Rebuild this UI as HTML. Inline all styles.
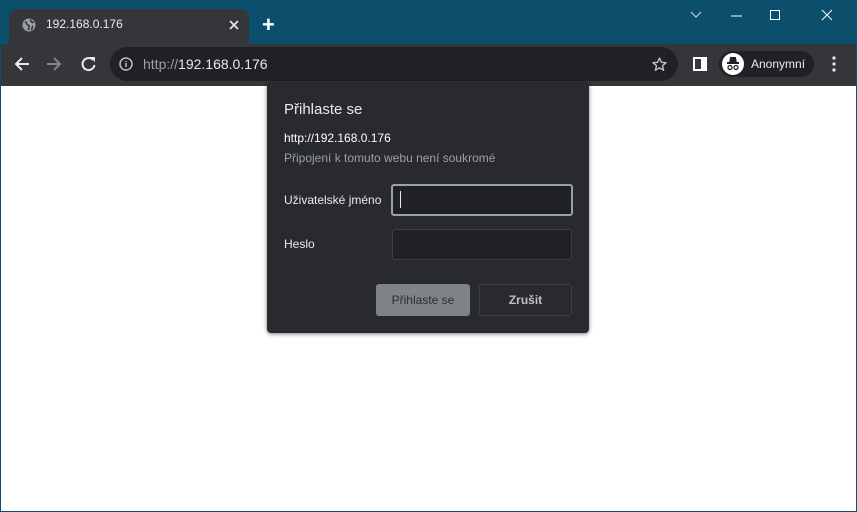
<!DOCTYPE html><html><head><style>
*{margin:0;padding:0;box-sizing:border-box}
body{width:857px;height:512px;overflow:hidden;background:#0b4f6c;font-family:"Liberation Sans",sans-serif;position:relative}
.abs{position:absolute}
</style></head><body>
<div class="abs" style="left:1px;top:86px;width:855px;height:425px;background:#fff"></div>
<div class="abs" style="left:1px;top:44px;width:855px;height:42px;background:#35363a"></div>
<div class="abs" style="left:9px;top:9px;width:240px;height:36px;background:#35363a;border-radius:8px 8px 0 0"></div>
<svg class="abs" style="left:22px;top:18px" width="14" height="14" viewBox="0 0 14 14"><circle cx="7" cy="7" r="6.5" fill="#9aa0a6"/><path d="M3 3.5c2 1 1 3 3 3.5s1 3 0 5M9 1.5c-1 2 1 3 3 3M10 8c1 1 0 3-1 4" stroke="#35363a" stroke-width="1.6" fill="none"/></svg>
<div class="abs" style="left:46px;top:17px;color:#e8eaed;font-size:12px">192.168.0.176</div>
<svg class="abs" style="left:229px;top:20px" width="10" height="10"><path d="M1 1l8 8M9 1l-8 8" stroke="#e8eaed" stroke-width="1.6"/></svg>
<div class="abs" style="left:262px;top:12px;color:#fff;font-size:22px;font-weight:bold">+</div>
<svg class="abs" style="left:688px;top:8px" width="160" height="16"><path d="M3 4l5 5 5-5" stroke="#cfd8dc" fill="none"/><path d="M43 8h11" stroke="#fff"/><rect x="82.5" y="2.5" width="9" height="9" stroke="#fff" fill="none"/><path d="M134 2l10 10M144 2l-10 10" stroke="#fff"/></svg>
<svg class="abs" style="left:12px;top:54px" width="90" height="20"><path d="M4 10h13M10 4l-6 6 6 6" stroke="#e8eaed" stroke-width="2" fill="none"/><path d="M35 10h13M42 4l6 6-6 6" stroke="#80868b" stroke-width="2" fill="none"/><path d="M81 6a6 6 0 1 0 1.5 5" stroke="#e8eaed" stroke-width="2" fill="none"/><path d="M78 3h5v5z" fill="#e8eaed"/></svg>
<div class="abs" style="left:110px;top:47px;width:568px;height:34px;background:#202124;border-radius:17px"></div>
<svg class="abs" style="left:119px;top:57px" width="14" height="14"><circle cx="7" cy="7" r="6" stroke="#bdc1c6" stroke-width="1.5" fill="none"/><path d="M7 6v4M7 4v1" stroke="#bdc1c6" stroke-width="1.5"/></svg>
<div class="abs" style="left:143px;top:56px;font-size:14px;color:#9aa0a6">http://<span style="color:#e8eaed">192.168.0.176</span></div>
<svg class="abs" style="left:652px;top:57px" width="15" height="15" viewBox="0 0 15 15"><path d="M7.5 1l1.9 4.3 4.6.4-3.5 3 1.1 4.6-4.1-2.5-4.1 2.5 1.1-4.6-3.5-3 4.6-.4z" stroke="#bdc1c6" stroke-width="1.4" fill="none" stroke-linejoin="round"/></svg>
<div class="abs" style="left:693px;top:57px;width:14px;height:14px;border:2px solid #fff;border-right-width:6px"></div>
<div class="abs" style="left:719px;top:51px;width:95px;height:26px;background:#202124;border-radius:13px"></div>
<div class="abs" style="left:722px;top:53px;width:22px;height:22px;background:#fff;border-radius:50%"></div>
<svg class="abs" style="left:722px;top:53px" width="22" height="22"><path d="M5 10h12M8 10l1-5h4l1 5" stroke="#202124" stroke-width="2" fill="#202124"/><circle cx="8" cy="14.5" r="2" stroke="#202124" fill="none" stroke-width="1.3"/><circle cx="14" cy="14.5" r="2" stroke="#202124" fill="none" stroke-width="1.3"/></svg>
<div class="abs" style="left:751px;top:57px;color:#e8eaed;font-size:12px">Anonymní</div>
<svg class="abs" style="left:831px;top:55px" width="6" height="18"><circle cx="3" cy="3" r="1.6" fill="#e8eaed"/><circle cx="3" cy="9" r="1.6" fill="#e8eaed"/><circle cx="3" cy="15" r="1.6" fill="#e8eaed"/></svg>
<div class="abs" style="left:267px;top:82px;width:322px;height:251px;background:#292a2d;border-radius:4px;box-shadow:0 1px 4px rgba(0,0,0,.5)">
<div class="abs" style="left:17px;top:19px;color:#e8eaed;font-size:15px">Přihlaste se</div>
<div class="abs" style="left:17px;top:49px;color:#fff;font-size:12px">http://192.168.0.176</div>
<div class="abs" style="left:17px;top:69px;color:#9aa0a6;font-size:12px">Připojení k tomuto webu není soukromé</div>
<div class="abs" style="left:17px;top:111px;color:#e8eaed;font-size:12px">Uživatelské jméno</div>
<div class="abs" style="left:124px;top:102px;width:182px;height:32px;background:#202124;border:2px solid #9aa0a6;border-radius:3px"><div style="position:absolute;left:7px;top:5px;width:1px;height:17px;background:#e8eaed"></div></div>
<div class="abs" style="left:17px;top:155px;color:#e8eaed;font-size:12px">Heslo</div>
<div class="abs" style="left:125px;top:147px;width:180px;height:31px;background:#202124;border:1px solid #3c4043;border-radius:3px"></div>
<div class="abs" style="left:109px;top:202px;width:94px;height:32px;background:#7f8388;border-radius:3px;color:#2d2e31;font-size:12px;text-align:center;line-height:32px">Přihlaste se</div>
<div class="abs" style="left:212px;top:202px;width:93px;height:32px;border:1px solid #3c4043;border-radius:3px;color:#bdc1c6;font-size:12px;text-align:center;line-height:30px;font-weight:bold">Zrušit</div>
</div>
</body></html>
